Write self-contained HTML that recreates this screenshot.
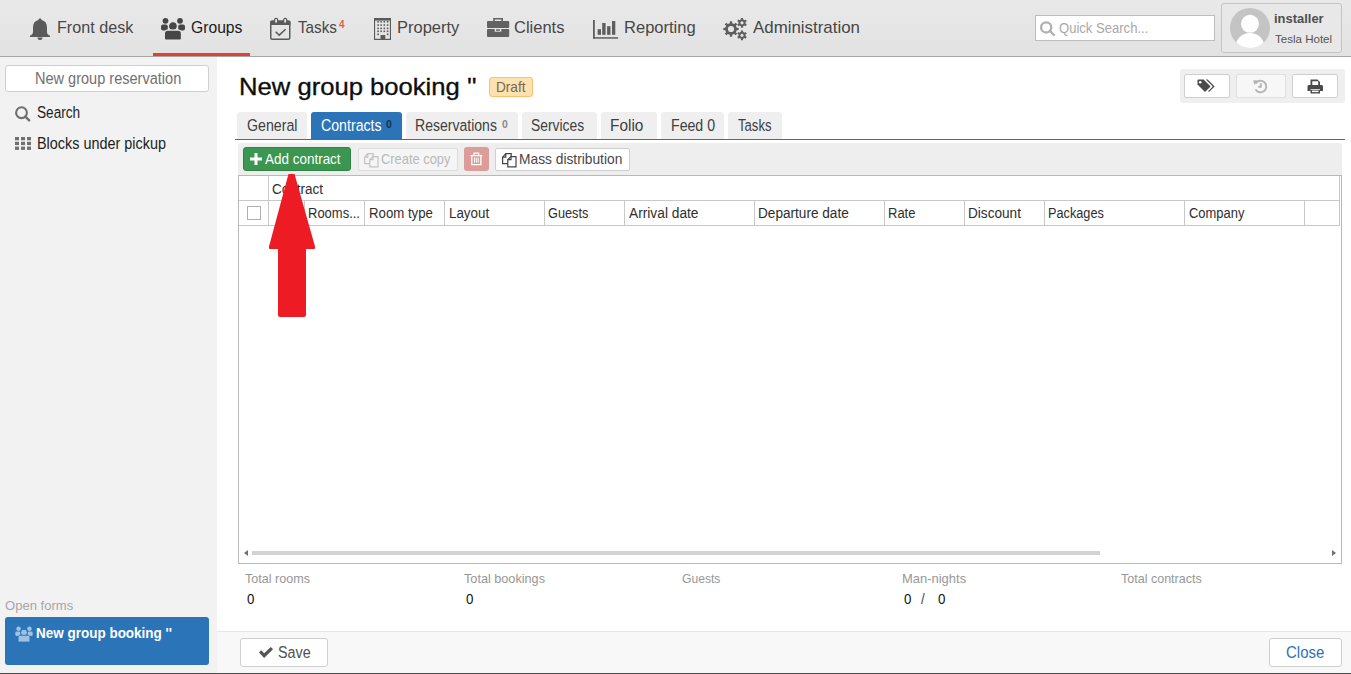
<!DOCTYPE html>
<html><head><meta charset="utf-8">
<style>
html,body{margin:0;padding:0;}
body{width:1351px;height:674px;position:relative;overflow:hidden;background:#fff;font-family:"Liberation Sans",sans-serif;}
.b{position:absolute;box-sizing:border-box;}
.t{position:absolute;white-space:nowrap;line-height:1;transform-origin:0 0;}
svg{position:absolute;overflow:visible;}
</style></head><body>
<!-- NAV -->
<div class="b" style="left:0;top:0;width:1351px;height:56px;background:linear-gradient(#e9e9e9,#e2e2e2);"></div>
<div class="b" style="left:0;top:56px;width:1351px;height:1px;background:#a6a6a6;"></div>
<div class="b" style="left:153px;top:53px;width:97px;height:3px;background:#e2412f;"></div>
<!-- search box -->
<div class="b" style="left:1035px;top:15px;width:180px;height:26px;background:#fff;border:1px solid #bdbdbd;"></div>
<!-- user box -->
<div class="b" style="left:1221px;top:3px;width:121px;height:50px;background:#e8e8e8;border:1px solid #c4c4c4;border-radius:3px;"></div>
<svg style="left:1230px;top:8px" width="40" height="40" viewBox="0 0 40 40">
  <defs><clipPath id="av"><circle cx="20" cy="20" r="20"/></clipPath></defs>
  <circle cx="20" cy="20" r="20" fill="#c4c4c4"/>
  <g clip-path="url(#av)" fill="#fff">
    <circle cx="20" cy="15.8" r="9"/>
    <ellipse cx="20" cy="37.5" rx="14" ry="12.5"/>
  </g>
</svg>
<!-- SIDEBAR -->
<div class="b" style="left:0;top:57px;width:217px;height:616px;background:#f2f2f2;"></div>
<div class="b" style="left:5px;top:65px;width:204px;height:27px;background:#fff;border:1px solid #d0d0d0;border-radius:3px;"></div>
<div class="b" style="left:5px;top:617px;width:204px;height:48px;background:#2b74b8;border-radius:3px;"></div>
<!-- FOOTER -->
<div class="b" style="left:217px;top:631px;width:1134px;height:42px;background:#f8f8f8;border-top:1px solid #e6e6e6;"></div>
<div class="b" style="left:0;top:673px;width:1351px;height:1px;background:#4a4a4a;"></div>
<div class="b" style="left:240px;top:638px;width:88px;height:29px;background:#fff;border:1px solid #cfcfcf;border-radius:3px;"></div>
<div class="b" style="left:1269px;top:638px;width:73px;height:29px;background:#fff;border:1px solid #cfcfcf;border-radius:3px;"></div>
<!-- TITLE badge -->
<div class="b" style="left:489px;top:77px;width:44px;height:20px;background:#fde1ae;border:1px solid #fbc170;border-radius:3px;"></div>
<!-- right action group -->
<div class="b" style="left:1180px;top:69px;width:165px;height:34px;background:#efefef;border-radius:3px;"></div>
<div class="b" style="left:1184px;top:74px;width:46px;height:24px;background:#fff;border:1px solid #cfcfcf;border-radius:2px;"></div>
<div class="b" style="left:1236px;top:74px;width:50px;height:24px;background:#f7f7f7;border:1px solid #e0e0e0;border-radius:2px;"></div>
<div class="b" style="left:1292px;top:74px;width:46px;height:24px;background:#fff;border:1px solid #cfcfcf;border-radius:2px;"></div>
<!-- TABS -->
<div class="b" style="left:237px;top:112px;width:70px;height:27px;background:#efefef;border-radius:3px 3px 0 0;"></div>
<div class="b" style="left:311px;top:112px;width:91px;height:27px;background:#2b74b8;border-radius:3px 3px 0 0;"></div>
<div class="b" style="left:406px;top:112px;width:112px;height:27px;background:#efefef;border-radius:3px 3px 0 0;"></div>
<div class="b" style="left:522px;top:112px;width:75px;height:27px;background:#efefef;border-radius:3px 3px 0 0;"></div>
<div class="b" style="left:601px;top:112px;width:56px;height:27px;background:#efefef;border-radius:3px 3px 0 0;"></div>
<div class="b" style="left:661px;top:112px;width:63px;height:27px;background:#efefef;border-radius:3px 3px 0 0;"></div>
<div class="b" style="left:728px;top:112px;width:54px;height:27px;background:#efefef;border-radius:3px 3px 0 0;"></div>
<div class="b" style="left:235px;top:139px;width:1110px;height:1px;background:#2b74b8;"></div>
<!-- TOOLBAR -->
<div class="b" style="left:238px;top:143px;width:1104px;height:32px;background:#eeeeee;border-radius:3px 3px 0 0;"></div>
<div class="b" style="left:243px;top:147px;width:108px;height:24px;background:#3a9650;border:1px solid #2f8444;border-radius:3px;"></div>
<div class="b" style="left:358px;top:148px;width:100px;height:23px;background:#f5f5f5;border:1px solid #dedede;border-radius:2px;"></div>
<div class="b" style="left:464px;top:147px;width:25px;height:24px;background:#dc9c97;border-radius:3px;"></div>
<div class="b" style="left:495px;top:148px;width:135px;height:23px;background:#fff;border:1px solid #cfcfcf;border-radius:2px;"></div>
<!-- TABLE -->
<div class="b" style="left:238px;top:175px;width:1104px;height:389px;border:1px solid #b9b9b9;background:#fff;"></div>
<div class="b" style="left:239px;top:200px;width:1100px;height:1px;background:#c8c8c8;"></div>
<div class="b" style="left:239px;top:225px;width:1100px;height:1px;background:#c8c8c8;"></div>
<div class="b" style="left:1339px;top:176px;width:1px;height:50px;background:#c8c8c8;"></div>
<div class="b" style="left:268px;top:176px;width:1px;height:50px;background:#c8c8c8;"></div>
<div id="cols"></div>
<div class="b" style="left:304px;top:201px;width:1px;height:25px;background:#c8c8c8;"></div>
<div class="b" style="left:364px;top:201px;width:1px;height:25px;background:#c8c8c8;"></div>
<div class="b" style="left:444px;top:201px;width:1px;height:25px;background:#c8c8c8;"></div>
<div class="b" style="left:544px;top:201px;width:1px;height:25px;background:#c8c8c8;"></div>
<div class="b" style="left:624px;top:201px;width:1px;height:25px;background:#c8c8c8;"></div>
<div class="b" style="left:754px;top:201px;width:1px;height:25px;background:#c8c8c8;"></div>
<div class="b" style="left:884px;top:201px;width:1px;height:25px;background:#c8c8c8;"></div>
<div class="b" style="left:964px;top:201px;width:1px;height:25px;background:#c8c8c8;"></div>
<div class="b" style="left:1044px;top:201px;width:1px;height:25px;background:#c8c8c8;"></div>
<div class="b" style="left:1184px;top:201px;width:1px;height:25px;background:#c8c8c8;"></div>
<div class="b" style="left:1304px;top:201px;width:1px;height:25px;background:#c8c8c8;"></div>
<!-- checkbox -->
<div class="b" style="left:247px;top:206px;width:14px;height:14px;background:#fff;border:1px solid #b0b0b0;"></div>
<!-- scrollbar -->
<div class="b" style="left:252px;top:551px;width:848px;height:4px;background:#d4d2d4;"></div>
<svg style="left:244px;top:550px" width="5" height="6"><path d="M4 0 L0 3 L4 6Z" fill="#707070"/></svg>
<svg style="left:1332px;top:550px" width="5" height="6"><path d="M0 0 L4 3 L0 6Z" fill="#707070"/></svg>

<!-- ICONS -->
<!-- bell -->
<svg style="left:29px;top:17px" width="22" height="23" viewBox="0 0 22 23">
  <path d="M11 1.5c1 0 1.6.7 1.6 1.5 3.6.8 5.4 3.6 5.4 7.5v4.5c0 1.6 1.1 3 3 3.8v1.2H1v-1.2c1.9-.8 3-2.2 3-3.8v-4.5C4 6.6 5.8 3.8 9.4 3 9.4 2.2 10 1.5 11 1.5z" fill="#5a5a5a"/>
  <path d="M8.5 20.5a2.5 2.5 0 0 0 5 0z" fill="#5a5a5a"/>
</svg>
<!-- groups -->
<svg style="left:161px;top:17px" width="24" height="23" viewBox="0 0 24 23">
  <g fill="#464646">
  <circle cx="4.5" cy="3.8" r="2.9"/><circle cx="19" cy="3.8" r="2.9"/>
  <rect x="0" y="7.6" width="6.8" height="6" rx="2"/>
  <rect x="17.2" y="7.6" width="6.8" height="6" rx="2"/>
  </g>
  <g fill="#464646" stroke="#e6e6e6" stroke-width="1.1">
  <circle cx="11.9" cy="9.1" r="4.4"/>
  <path d="M3.4 16.4c0-1.8 1.4-3.3 3.2-3.3h10.6c1.8 0 3.2 1.5 3.2 3.3v5.2c0 .8-.6 1.4-1.4 1.4H4.8c-.8 0-1.4-.6-1.4-1.4z"/>
  </g>
</svg>
<!-- calendar check -->
<svg style="left:270px;top:18px" width="21" height="22" viewBox="0 0 21 22">
  <rect x="0.75" y="3" width="19" height="18.25" rx="1.5" fill="none" stroke="#5a5a5a" stroke-width="1.5"/>
  <rect x="0" y="3" width="20.5" height="4" rx="1" fill="#5a5a5a"/>
  <rect x="4.6" y="0.4" width="3" height="5" rx="1.4" fill="#e6e6e6" stroke="#5a5a5a" stroke-width="1.2"/>
  <rect x="13.7" y="0.4" width="3" height="5" rx="1.4" fill="#e6e6e6" stroke="#5a5a5a" stroke-width="1.2"/>
  <path d="M5.6 13.7l3.6 3.4 6.4-5.9" fill="none" stroke="#5a5a5a" stroke-width="1.5"/>
</svg>
<!-- building -->
<svg style="left:374px;top:18px" width="17" height="22" viewBox="0 0 17 22">
  <g fill="#5a5a5a">
  <rect x="0" y="0" width="17" height="2.6"/>
  <rect x="0" y="0" width="1.1" height="22"/><rect x="15.9" y="0" width="1.1" height="22"/>
  <rect x="0" y="20.8" width="17" height="1.2"/>
  <rect x="3.3" y="3" width="1.6" height="1.6"/><rect x="6.3" y="3" width="1.6" height="1.6"/><rect x="9.5" y="3" width="1.6" height="1.6"/><rect x="12.8" y="3" width="1.6" height="1.6"/>
  <rect x="3.3" y="6.3" width="1.6" height="1.6"/><rect x="6.3" y="6.3" width="1.6" height="1.6"/><rect x="9.5" y="6.3" width="1.6" height="1.6"/><rect x="12.8" y="6.3" width="1.6" height="1.6"/>
  <rect x="3.3" y="9.6" width="1.6" height="1.6"/><rect x="6.3" y="9.6" width="1.6" height="1.6"/><rect x="9.5" y="9.6" width="1.6" height="1.6"/><rect x="12.8" y="9.6" width="1.6" height="1.6"/>
  <rect x="3.3" y="12.5" width="1.6" height="1.6"/><rect x="6.3" y="12.5" width="1.6" height="1.6"/><rect x="9.5" y="12.5" width="1.6" height="1.6"/><rect x="12.8" y="12.5" width="1.6" height="1.6"/>
  <rect x="3.3" y="15.5" width="1.6" height="1.6"/><rect x="12.8" y="15.5" width="1.6" height="1.6"/>
  <rect x="6.5" y="17" width="4.8" height="5"/>
  </g>
</svg>
<!-- briefcase -->
<svg style="left:487px;top:18px" width="23" height="19" viewBox="0 0 23 19">
  <g fill="#626262">
  <path d="M6.2 3.2V0h9.8v3.2h-1.6V1.5H7.8v1.7z"/>
  <rect x="0" y="3.1" width="22.2" height="6.8" rx="1"/>
  <rect x="0" y="10.9" width="22.2" height="8.1" rx="1"/>
  </g>
  <rect x="7.7" y="10.3" width="6.6" height="3.4" fill="#e6e6e6"/>
  <rect x="9" y="11.3" width="4" height="1.5" fill="#626262"/>
</svg>
<!-- chart -->
<svg style="left:593px;top:20px" width="26" height="19" viewBox="0 0 26 19">
  <g fill="#5e5e5e">
  <rect x="0" y="0" width="1.8" height="18.7"/><rect x="0" y="17.2" width="25.1" height="1.5"/>
  <rect x="4.6" y="9.2" width="3.4" height="5.6"/><rect x="9.2" y="3" width="3.4" height="11.8"/><rect x="14.1" y="6.2" width="3.4" height="8.6"/><rect x="19" y="1" width="3.3" height="13.8"/>
  </g>
</svg>
<!-- gears -->
<svg style="left:722px;top:18px" width="26" height="23" viewBox="0 0 26 23">
  <g fill="#5e5e5e" fill-rule="evenodd">
  <path d="M7.81 5.22 L7.90 3.28 L10.10 3.28 L10.19 5.22 L12.24 6.07 L13.68 4.76 L15.24 6.32 L13.93 7.76 L14.78 9.81 L16.72 9.90 L16.72 12.10 L14.78 12.19 L13.93 14.24 L15.24 15.68 L13.68 17.24 L12.24 15.93 L10.19 16.78 L10.10 18.72 L7.90 18.72 L7.81 16.78 L5.76 15.93 L4.32 17.24 L2.76 15.68 L4.07 14.24 L3.22 12.19 L1.28 12.10 L1.28 9.90 L3.22 9.81 L4.07 7.76 L2.76 6.32 L4.32 4.76 L5.76 6.07Z M12.10 11.00 A3.1 3.1 0 1 0 5.90 11.00 A3.1 3.1 0 1 0 12.10 11.00Z"/>
  <path d="M18.93 1.36 L18.96 -0.09 L21.04 -0.09 L21.07 1.36 L22.44 2.16 L23.72 1.45 L24.76 3.25 L23.51 4.01 L23.51 5.59 L24.76 6.35 L23.72 8.15 L22.44 7.44 L21.07 8.24 L21.04 9.69 L18.96 9.69 L18.93 8.24 L17.56 7.44 L16.28 8.15 L15.24 6.35 L16.49 5.59 L16.49 4.01 L15.24 3.25 L16.28 1.45 L17.56 2.16Z M21.60 4.80 A1.6 1.6 0 1 0 18.40 4.80 A1.6 1.6 0 1 0 21.60 4.80Z"/>
  <path d="M18.93 13.86 L18.96 12.41 L21.04 12.41 L21.07 13.86 L22.44 14.66 L23.72 13.95 L24.76 15.75 L23.51 16.51 L23.51 18.09 L24.76 18.85 L23.72 20.65 L22.44 19.94 L21.07 20.74 L21.04 22.19 L18.96 22.19 L18.93 20.74 L17.56 19.94 L16.28 20.65 L15.24 18.85 L16.49 18.09 L16.49 16.51 L15.24 15.75 L16.28 13.95 L17.56 14.66Z M21.60 17.30 A1.6 1.6 0 1 0 18.40 17.30 A1.6 1.6 0 1 0 21.60 17.30Z"/>
  </g>
</svg>
<!-- quick search icon -->
<svg style="left:1040px;top:21px" width="16" height="15" viewBox="0 0 16 15">
  <circle cx="6.2" cy="6.4" r="5.1" fill="none" stroke="#b0b0b0" stroke-width="2.3"/>
  <path d="M9.8 9.8L14 14" stroke="#b0b0b0" stroke-width="2.4" stroke-linecap="round"/>
</svg>
<!-- sidebar search icon -->
<svg style="left:14px;top:105px" width="17" height="17" viewBox="0 0 17 17">
  <circle cx="7.5" cy="7.7" r="5.4" fill="none" stroke="#6e6e6e" stroke-width="2.1"/>
  <path d="M11.3 11.6L15.2 15.4" stroke="#6e6e6e" stroke-width="2.3" stroke-linecap="round"/>
</svg>
<!-- blocks icon -->
<svg style="left:15px;top:137px" width="16" height="13" viewBox="0 0 16 13">
  <g fill="#707070">
  <rect x="0" y="0" width="4" height="3.3"/><rect x="6" y="0" width="4" height="3.3"/><rect x="12" y="0" width="4" height="3.3"/>
  <rect x="0" y="4.8" width="4" height="3.3"/><rect x="6" y="4.8" width="4" height="3.3"/><rect x="12" y="4.8" width="4" height="3.3"/>
  <rect x="0" y="9.6" width="4" height="3.3"/><rect x="6" y="9.6" width="4" height="3.3"/><rect x="12" y="9.6" width="4" height="3.3"/>
  </g>
</svg>
<!-- open form groups icon -->
<svg style="left:15px;top:626px" width="18" height="16" viewBox="0 0 24 22">
  <g fill="#9fc1e2">
  <circle cx="4.5" cy="3.8" r="3.1"/><circle cx="19.5" cy="3.8" r="3.1"/>
  <rect x="0" y="7.6" width="7" height="6" rx="2"/>
  <rect x="17" y="7.6" width="7" height="6" rx="2"/>
  </g>
  <g fill="#9fc1e2" stroke="#2b74b8" stroke-width="1.2">
  <circle cx="12" cy="9.1" r="4.6"/>
  <path d="M3.8 16c0-1.8 1.4-3.3 3.2-3.3h10c1.8 0 3.2 1.5 3.2 3.3v4.6c0 .8-.6 1.4-1.4 1.4H5.2c-.8 0-1.4-.6-1.4-1.4z"/>
  </g>
</svg>
<!-- plus -->
<svg style="left:250px;top:153px" width="12" height="12" viewBox="0 0 12 12">
  <path d="M4.5 0h3v4.5H12v3H7.5V12h-3V7.5H0v-3h4.5z" fill="#fff"/>
</svg>
<!-- copy icons -->
<svg style="left:364px;top:153px" width="15" height="15" viewBox="0 0 15 15">
  <g fill="none" stroke="#c4c4c4" stroke-width="1.2" stroke-linejoin="miter">
  <path d="M5.8 10.6H0.6V4.2L3.8 0.6H9.2V3.6"/>
  <path d="M0.6 4.2H3.8V0.6"/>
  <path d="M5.8 6.6L9 3.6H14V13.8H5.8Z"/>
  <path d="M5.8 6.6H9V3.6"/>
  </g>
</svg>
<svg style="left:502px;top:153px" width="15" height="15" viewBox="0 0 15 15">
  <g fill="none" stroke="#444" stroke-width="1.2" stroke-linejoin="miter">
  <path d="M5.8 10.6H0.6V4.2L3.8 0.6H9.2V3.6"/>
  <path d="M0.6 4.2H3.8V0.6"/>
  <path d="M5.8 6.6L9 3.6H14V13.8H5.8Z"/>
  <path d="M5.8 6.6H9V3.6"/>
  </g>
</svg>
<!-- trash -->
<svg style="left:470px;top:152px" width="13" height="14" viewBox="0 0 13 14">
  <g fill="none" stroke="#fff" stroke-width="1.3">
  <path d="M0.5 3.6H12.2"/>
  <path d="M4 3.6V1.2H8.6V3.6"/>
  <path d="M1.8 3.6V12.6H10.9V3.6"/>
  <path d="M4.5 5.6V10.6M6.35 5.6V10.6M8.2 5.6V10.6" stroke-width="1"/>
  </g>
</svg>
<!-- tag icon -->
<svg style="left:1197px;top:79px" width="19" height="15" viewBox="0 0 19 15">
  <g fill="#4a4a4a">
  <path d="M0.5 1.6C0.5 1 1 0.5 1.6 0.5H6.6L13.6 7.5L8 13.1L0.5 5.6Z"/>
  <path d="M8.8 0.5H10.6L17.6 7.5L12 13.1L11.1 12.2L15.8 7.5Z"/>
  </g>
  <circle cx="3.2" cy="3.2" r="1.3" fill="#fff"/>
</svg>
<!-- history icon -->
<svg style="left:1253px;top:79px" width="15" height="15" viewBox="0 0 15 15">
  <g fill="none" stroke="#b4b4b4" stroke-width="1.9">
  <path d="M2.6 4.4A5.8 5.8 0 1 1 2.4 10.4"/>
  <path d="M7.8 4.2V7.9H5.2"/>
  </g>
  <path d="M0.2 1.2L5.2 1.6L1.4 6z" fill="#b4b4b4"/>
</svg>
<!-- print icon -->
<svg style="left:1307px;top:79px" width="17" height="15" viewBox="0 0 17 15">
  <g fill="#4a4a4a">
  <path d="M3.5 0.5H10.5L13 3V6H11.2V2.3H5.3V6H3.5Z"/>
  <path d="M0.5 7.5C0.5 6.7 1.2 6 2 6H14.5C15.3 6 16 6.7 16 7.5V12H13V10.2H3.5V12H0.5Z"/>
  <path d="M3.5 11H13V14.5H3.5Z"/>
  </g>
  <rect x="5" y="11.6" width="6.5" height="1.5" fill="#fff"/>
</svg>
<!-- check (save) -->
<svg style="left:259px;top:647px" width="14" height="11" viewBox="0 0 14 11">
  <path d="M0 5.5l2.2-2.2 2.9 2.9L11.8 0 14 2.2 5.1 11z" fill="#555"/>
</svg>

<div class="t" style="left:56.85px;top:18.90px;font-size:17px;color:#474747;transform:scaleX(0.9506);">Front desk</div>
<div class="t" style="left:190.58px;top:18.90px;font-size:17px;color:#1c1c1c;transform:scaleX(0.9222);">Groups</div>
<div class="t" style="left:297.90px;top:18.90px;font-size:17px;color:#474747;transform:scaleX(0.8953);">Tasks</div>
<div class="t" style="left:339.40px;top:19.00px;font-size:10.5px;font-weight:bold;color:#e65e4a;transform:scaleX(0.9500);">4</div>
<div class="t" style="left:396.53px;top:18.90px;font-size:17px;color:#474747;transform:scaleX(0.9698);">Property</div>
<div class="t" style="left:514.43px;top:18.90px;font-size:17px;color:#474747;transform:scaleX(0.9706);">Clients</div>
<div class="t" style="left:623.53px;top:18.90px;font-size:17px;color:#474747;transform:scaleX(0.9722);">Reporting</div>
<div class="t" style="left:753.30px;top:18.90px;font-size:17px;color:#474747;transform:scaleX(0.9925);">Administration</div>
<div class="t" style="left:1058.80px;top:21.10px;font-size:14.5px;color:#a9a9a9;transform:scaleX(0.9010);">Quick Search...</div>
<div class="t" style="left:1273.74px;top:12.00px;font-size:13.5px;font-weight:bold;color:#4f4f4f;transform:scaleX(0.9588);">installer</div>
<div class="t" style="left:1274.70px;top:33.80px;font-size:11.5px;color:#555;transform:scaleX(1.0036);">Tesla Hotel</div>
<div class="t" style="left:34.66px;top:69.70px;font-size:15.5px;color:#707070;transform:scale(0.9377,1.1000);">New group reservation</div>
<div class="t" style="left:36.69px;top:103.70px;font-size:15px;color:#1e1e1e;transform:scale(0.9087,1.1000);">Search</div>
<div class="t" style="left:36.64px;top:134.70px;font-size:15px;color:#1e1e1e;transform:scale(0.9609,1.1000);">Blocks under pickup</div>
<div class="t" style="left:4.50px;top:599.00px;font-size:13px;color:#a6a6a6;transform:scaleX(1.0045);">Open forms</div>
<div class="t" style="left:36.33px;top:625.00px;font-size:15.5px;font-weight:bold;color:#fff;transform:scaleX(0.8697);">New group booking ''</div>
<div class="t" style="left:239.01px;top:75.40px;font-size:24.5px;color:#0e0e0e;-webkit-text-stroke:0.35px #0e0e0e;transform:scaleX(1.0460);">New group booking ''</div>
<div class="t" style="left:495.76px;top:79.90px;font-size:14.5px;color:#75685a;transform:scaleX(0.9387);">Draft</div>
<div class="t" style="left:246.55px;top:116.70px;font-size:15px;color:#404040;transform:scale(0.9462,1.1000);">General</div>
<div class="t" style="left:320.76px;top:116.70px;font-size:15px;color:#fff;transform:scale(0.9444,1.1000);">Contracts</div>
<div class="t" style="left:415.46px;top:116.70px;font-size:15px;color:#404040;transform:scale(0.9360,1.1000);">Reservations</div>
<div class="t" style="left:531.38px;top:116.70px;font-size:15px;color:#404040;transform:scale(0.9232,1.1000);">Services</div>
<div class="t" style="left:610.37px;top:116.70px;font-size:15px;color:#404040;transform:scale(1.0258,1.1000);">Folio</div>
<div class="t" style="left:670.56px;top:116.70px;font-size:15px;color:#404040;transform:scale(0.9422,1.1000);">Feed 0</div>
<div class="t" style="left:738.40px;top:116.70px;font-size:15px;color:#404040;transform:scale(0.8737,1.1000);">Tasks</div>
<div class="t" style="left:385.80px;top:119.20px;font-size:11px;font-weight:bold;color:#17324f;transform:scaleX(0.9500);">0</div>
<div class="t" style="left:501.80px;top:119.20px;font-size:11px;font-weight:bold;color:#8a8a8a;transform:scaleX(0.9500);">0</div>
<div class="t" style="left:265.10px;top:151.78px;font-size:13.5px;color:#fff;transform:scale(0.9974,1.1111);">Add contract</div>
<div class="t" style="left:381.35px;top:151.78px;font-size:13.5px;color:#b9b9b9;transform:scale(0.9542,1.1111);">Create copy</div>
<div class="t" style="left:519.28px;top:151.78px;font-size:13.5px;color:#484848;transform:scale(1.0200,1.1111);">Mass distribution</div>
<div class="t" style="left:272.44px;top:181.80px;font-size:14px;color:#2e2e2e;transform:scaleX(0.9615);">Contract</div>
<div class="t" style="left:308.47px;top:206.20px;font-size:14px;color:#2e2e2e;transform:scaleX(0.9278);">Rooms...</div>
<div class="t" style="left:368.76px;top:206.20px;font-size:14px;color:#2e2e2e;transform:scaleX(0.9439);">Room type</div>
<div class="t" style="left:448.65px;top:206.20px;font-size:14px;color:#2e2e2e;transform:scaleX(0.9537);">Layout</div>
<div class="t" style="left:548.29px;top:206.20px;font-size:14px;color:#2e2e2e;transform:scaleX(0.9093);">Guests</div>
<div class="t" style="left:629.10px;top:206.20px;font-size:14px;color:#2e2e2e;transform:scaleX(0.9814);">Arrival date</div>
<div class="t" style="left:758.43px;top:206.20px;font-size:14px;color:#2e2e2e;transform:scaleX(0.9717);">Departure date</div>
<div class="t" style="left:888.47px;top:206.20px;font-size:14px;color:#2e2e2e;transform:scaleX(0.9286);">Rate</div>
<div class="t" style="left:968.43px;top:206.20px;font-size:14px;color:#2e2e2e;transform:scaleX(0.9717);">Discount</div>
<div class="t" style="left:1048.29px;top:206.20px;font-size:14px;color:#2e2e2e;transform:scaleX(0.9083);">Packages</div>
<div class="t" style="left:1188.58px;top:206.20px;font-size:14px;color:#2e2e2e;transform:scaleX(0.9237);">Company</div>
<div class="t" style="left:245.20px;top:572.30px;font-size:13.5px;color:#979797;transform:scaleX(0.9333);">Total rooms</div>
<div class="t" style="left:463.90px;top:572.30px;font-size:13.5px;color:#979797;transform:scaleX(0.9384);">Total bookings</div>
<div class="t" style="left:682.30px;top:572.30px;font-size:13.5px;color:#979797;transform:scaleX(0.8976);">Guests</div>
<div class="t" style="left:901.84px;top:572.30px;font-size:13.5px;color:#979797;transform:scaleX(0.9600);">Man-nights</div>
<div class="t" style="left:1121.40px;top:572.30px;font-size:13.5px;color:#979797;transform:scaleX(0.9276);">Total contracts</div>
<div class="t" style="left:247.40px;top:591.70px;font-size:14px;color:#111;transform:scaleX(0.9500);">0</div>
<div class="t" style="left:466.40px;top:591.70px;font-size:14px;color:#111;transform:scaleX(0.9500);">0</div>
<div class="t" style="left:904.30px;top:591.70px;font-size:14px;color:#111;transform:scaleX(0.9500);">0</div>
<div class="t" style="left:920.90px;top:591.70px;font-size:14px;color:#444;transform:scaleX(0.9500);">/</div>
<div class="t" style="left:937.50px;top:591.70px;font-size:14px;color:#111;transform:scaleX(0.9500);">0</div>
<div class="t" style="left:277.58px;top:643.73px;font-size:15.5px;color:#505050;transform:scale(0.9235,1.0900);">Save</div>
<div class="t" style="left:1286.33px;top:643.73px;font-size:15.5px;color:#2a72b5;transform:scale(0.9658,1.0900);">Close</div>

<!-- red arrow -->
<svg style="left:268px;top:174px" width="48" height="143" viewBox="0 0 48 143">
  <path d="M20.5 0h6L47 72.5v1.5c0 .5-.4 1-1 1H38v66c0 1.2-1 2-2 2H12c-1 0-2-.8-2-2v-66H2c-.6 0-1-.5-1-1v-1.5z" fill="#ed1c24"/>
</svg>
</body></html>
